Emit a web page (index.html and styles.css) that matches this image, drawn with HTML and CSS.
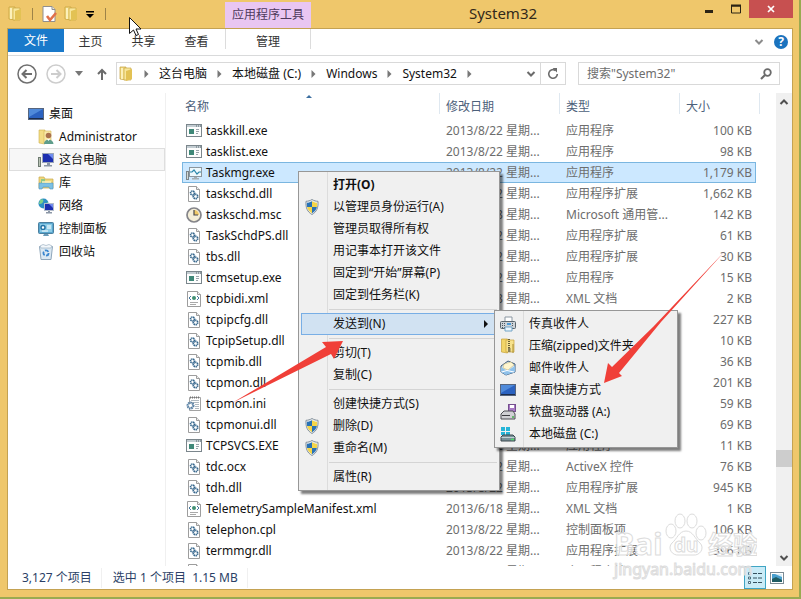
FILE: index.html
```html
<!DOCTYPE html>
<html lang="zh-CN">
<head>
    <meta charset="UTF-8">
    <meta name="viewport" content="width=device-width, initial-scale=1.0">
    <title>System32</title>
    <link rel="stylesheet" href="styles.css">
</head>
<body>
    <!-- Shared icons -->
    <svg class="sprite" aria-hidden="true">
        <symbol id="i-folder" viewBox="0 0 16 16">
            <path d="M2 1h6v13l-6-1z" fill="#f3dd85" stroke="#c39f3a" stroke-width=".7"/>
            <path d="M6 2h7v12H6z" fill="#f8e79c" stroke="#c9a746" stroke-width=".7"/>
            <path d="M8 5l6-2v10l-6 2z" fill="#e3c254"/>
            <path d="M4 2v11" stroke="#fff6cc" stroke-width="1.500"/>
        </symbol>
        <symbol id="i-props" viewBox="0 0 16 16">
            <path d="M1 .5h9l3 3v12H1z" fill="#fff" stroke="#8f8f8f"/>
            <path d="M10 .5v3h3" fill="#e4e4e4" stroke="#8f8f8f"/>
            <path d="M5 10l3 4 6-7" fill="none" stroke="#e0704a" stroke-width="2.600"/>
        </symbol>
        <symbol id="i-desktop" viewBox="0 0 16 16">
            <rect x=".5" y="2.500" width="15" height="11" fill="#2b62c0" stroke="#56657e"/>
            <path d="M1 3h14L1 11z" fill="#5f9be6" opacity=".7"/>
            <path d="M1 12.500h14" stroke="#1c2d4c"/>
        </symbol>
        <symbol id="i-user" viewBox="0 0 16 16">
            <path d="M1 1h6v14l-6-1z" fill="#f3dd85" stroke="#cfae4c" stroke-width=".6"/>
            <path d="M6 2h7v12H6z" fill="#f9e9a8" stroke="#d3b656" stroke-width=".6"/>
            <circle cx="10.500" cy="6.500" r="2.800" fill="#a9714c"/>
            <path d="M6 15c0-6 9-6 9.500 0z" fill="#5f9d8b"/>
            <path d="M9 10l1.500 2 1.500-2z" fill="#fff"/>
        </symbol>
        <symbol id="i-computer" viewBox="0 0 16 16">
            <rect x=".5" y="5.500" width="2" height="9" fill="#b9c4b6" stroke="#6f7b72"/>
            <rect x="4.500" y="1.500" width="11" height="9" fill="#1c2fb0" stroke="#9aa5b8"/>
            <path d="M10 2h5v5z" fill="#6f8cf0"/>
            <path d="M9 11h3v2H9zM6 13h8v1.500H6z" fill="#8c97a6"/>
        </symbol>
        <symbol id="i-library" viewBox="0 0 16 16">
            <path d="M1 2h5l1 2h8v9H1z" fill="#f0d77c" stroke="#c9a94a" stroke-width=".7"/>
            <path d="M3 4h4v4H3z" fill="#8fc98a"/>
            <path d="M1 14V8h14v6h-3l-1-2H5l-1 2z" fill="#7cc0e4" stroke="#5393bd" stroke-width=".6"/>
            <path d="M4 7h9" stroke="#fff3bd" stroke-width="1.500"/>
        </symbol>
        <symbol id="i-network" viewBox="0 0 16 16">
            <circle cx="5.500" cy="5.500" r="5" fill="#2c8fc4"/>
            <path d="M2 2c3-2 4 0 3 2S2 6 1 6zM7 6l3-2v4z" fill="#7ed08a"/>
            <rect x="6.500" y="5.500" width="9" height="7" fill="#1c2fb0" stroke="#b3bccb"/>
            <path d="M11 6h4v4z" fill="#7089ee"/>
            <path d="M10 13h2v1h2v1.500H8V14h2z" fill="#8c97a6"/>
        </symbol>
        <symbol id="i-control" viewBox="0 0 16 16">
            <rect x=".5" y="1.500" width="15" height="11" rx="1" fill="#5aa7cf" stroke="#4b7f9e"/>
            <rect x="2" y="3" width="12" height="8" fill="#8ccbe6"/>
            <circle cx="5" cy="6.500" r="2" fill="#fff" stroke="#2673a5" stroke-width="1.500"/>
            <path d="M9 5h4M9 7h4M4 10h6" stroke="#fff"/>
            <path d="M6 13h4l1 2H5z" fill="#6b9bb8"/>
        </symbol>
        <symbol id="i-bin" viewBox="0 0 16 16">
            <path d="M1.500 2.500h13L13 15.500H3z" fill="#dbe8f2" stroke="#8fa6ba"/>
            <path d="M2 2l3-1.500 3 1 3-1 3 1.500-1 2H3z" fill="#f4f8fb" stroke="#8fa6ba" stroke-width=".6"/>
            <circle cx="8" cy="9" r="2.600" fill="none" stroke="#3a86cf" stroke-width="1.800" stroke-dasharray="4 1.400"/>
        </symbol>
        <symbol id="i-exe" viewBox="0 0 16 16">
            <rect x=".5" y="1.500" width="15" height="12" fill="#fdfdfd" stroke="#7b868c"/>
            <path d="M1 3h14" stroke="#c3cdd2" stroke-width="2"/>
            <path d="M10 3h1M12 3h1M14 3h1" stroke="#56656d"/>
            <path d="M3 6h5v5H3z" fill="#3f8878"/>
            <path d="M10 6.500h3M10 8.500h3M10 10.500h2" stroke="#9aa5ab"/>
        </symbol>
        <symbol id="i-taskmgr" viewBox="0 0 16 16">
            <rect x=".5" y="6.500" width="2" height="8" fill="#d5dbd7" stroke="#7b858a"/>
            <rect x="3.500" y="2.500" width="12" height="9" fill="#eef8fc" stroke="#8b969d"/>
            <path d="M4 7h2l2-2 3 4 2-2h2" fill="none" stroke="#2b87ab" stroke-width="1.200"/>
            <path d="M8 12h3v1h2v1.500H6V13h2z" fill="#a5aeb2"/>
        </symbol>
        <symbol id="i-dll" viewBox="0 0 16 16">
            <path d="M2.500.5h8l3 3v12h-11z" fill="#fff" stroke="#9d9d9d"/>
            <path d="M10.500.5v3h3" fill="#eee" stroke="#9d9d9d"/>
            <circle cx="6.500" cy="7" r="2" fill="#fff" stroke="#35668c" stroke-width="1.700" stroke-dasharray="1.300 .5"/>
            <circle cx="9.500" cy="10.500" r="2.200" fill="#fff" stroke="#35668c" stroke-width="1.700" stroke-dasharray="1.300 .5"/>
        </symbol>
        <symbol id="i-msc" viewBox="0 0 16 16">
            <circle cx="8" cy="8" r="7" fill="#f5efd9" stroke="#85858a" stroke-width="1.700"/>
            <path d="M8 3a5 5 0 0 1 5 5H8z" fill="#f1ca68"/>
            <path d="M8 3v5h4" fill="none" stroke="#4a4a50" stroke-width="1.200"/>
        </symbol>
        <symbol id="i-xml" viewBox="0 0 16 16">
            <path d="M1.500.5h10l3 3v12h-13z" fill="#fff" stroke="#9d9d9d"/>
            <path d="M11.500.5v3h3" fill="#eee" stroke="#9d9d9d"/>
            <circle cx="8" cy="7" r="2" fill="#3f8f72"/>
            <path d="M5 5L3 7l2 2M11 5l2 2-2 2" fill="none" stroke="#4678a0"/>
            <path d="M4 11.500h8M4 13.500h6" stroke="#a9a9a9"/>
        </symbol>
        <symbol id="i-ini" viewBox="0 0 16 16">
            <path d="M3.500 1.500h11v13h-11z" fill="#fff" stroke="#a3a3a3"/>
            <path d="M4 1.500h10" stroke="#777" stroke-width="2" stroke-dasharray="1 1"/>
            <path d="M5 4.500h8M5 6.500h8M9 8.500h4M9 10.500h4M9 12.500h4" stroke="#b0bac2"/>
            <circle cx="4.500" cy="9.500" r="2.800" fill="#fff" stroke="#577fa3" stroke-width="2.400" stroke-dasharray="1.500 .6"/>
        </symbol>
        <symbol id="i-shield" viewBox="0 0 16 16">
            <path d="M8 .5c2 1.300 4 1.700 6 1.800C14.500 9 12.500 13 8 15.500 3.500 13 1.500 9 2 2.300 4 2.200 6 1.800 8 .5z" fill="#e9edf0" stroke="#85929c"/>
            <path d="M8 2.200V8H3.100c-.3-1.400-.3-2.800-.2-4.200C5 3.600 6.500 3.100 8 2.200z" fill="#2a72b5"/>
            <path d="M8 2.200c1.500.9 3 1.400 5.100 1.600.1 1.400.1 2.800-.2 4.200H8z" fill="#f4d548"/>
            <path d="M8 8v6.200C5.400 12.700 3.700 10.700 3.100 8z" fill="#f4d548"/>
            <path d="M8 8h4.900c-.6 2.700-2.300 4.700-4.900 6.200z" fill="#2a72b5"/>
        </symbol>
        <symbol id="i-fax" viewBox="0 0 16 16">
            <path d="M5 1h7v5H5z" fill="#fff" stroke="#8b97a2"/>
            <rect x=".5" y="5.500" width="15" height="7" rx="1" fill="#ccd2d7" stroke="#59646d"/>
            <path d="M2 7.500h4M2 9.500h4M2 11.500h3M12 7.500h2M12 9.500h2" stroke="#4d5861" stroke-dasharray="1 1"/>
            <path d="M7 7h4v2H7z" fill="#4f9bd6"/>
            <path d="M5 11h7v4H5z" fill="#eaf5fd" stroke="#73a4c6"/>
        </symbol>
        <symbol id="i-zip" viewBox="0 0 16 16">
            <path d="M1.500 1h6v14l-6-1z" fill="#f2d568" stroke="#c7a23a" stroke-width=".7"/>
            <path d="M6 2h8v12H6z" fill="#f7e28c" stroke="#c7a23a" stroke-width=".7"/>
            <path d="M9 1v9" stroke="#6d6234" stroke-width="2" stroke-dasharray="1 1"/>
            <rect x="8" y="10" width="2.500" height="4" fill="#8b8158"/>
            <path d="M13 6v9" stroke="#a98e33"/>
        </symbol>
        <symbol id="i-mail" viewBox="0 0 16 16">
            <path d="M1 6l7-5 7 3v8l-9 3-5-3z" fill="#cfe4f6" stroke="#3f5c7b"/>
            <path d="M4 4l7-2 3 3-6 5-5-2z" fill="#fff6cf" stroke="#c3b070" stroke-width=".5"/>
            <path d="M1 7l6 4 8-5v6l-9 3-5-3z" fill="#8fc1ea"/>
            <path d="M1.500 12L7 10.500 14 12" fill="none" stroke="#fff"/>
        </symbol>
        <symbol id="i-floppy" viewBox="0 0 16 16">
            <rect x="8.500" y=".5" width="7" height="7" fill="#a879c4" stroke="#76508f"/>
            <path d="M10 1h4v3h-4z" fill="#fff"/>
            <path d="M1 10l3-3h9l2 3v5H1z" fill="#d0d0d4" stroke="#4c4c52"/>
            <path d="M2 11.500h8" stroke="#3b3b40"/>
            <path d="M12 13h2" stroke="#43b04a" stroke-width="1.500"/>
        </symbol>
        <symbol id="i-drive" viewBox="0 0 16 16">
            <path d="M1 1h4v4H1zM6 1h4v4H6zM1 6h4v3H1zM6 6h4v3H6z" fill="#25b5d8"/>
            <path d="M1 11l2-2h10l2 2v4H1z" fill="#789098" stroke="#3a474d"/>
            <path d="M1.500 11.500h13" stroke="#c3d2d6"/>
            <path d="M11 13.500h3" stroke="#4fe06a" stroke-width="1.500"/>
        </symbol>
        <symbol id="i-tri" viewBox="0 0 8 8">
            <path d="M2 0l4 4-4 4z" fill="currentColor"/>
        </symbol>
        <symbol id="i-chevron" viewBox="0 0 10 10">
            <path d="M1.500 3L5 6.500 8.500 3" fill="none" stroke="currentColor" stroke-width="2"/>
        </symbol>
    </svg>

    <div class="window">
        <header class="title-bar">
            <div class="quick-access">
                <svg class="icon"><use href="#i-folder"/></svg>
                <span class="divider"></span>
                <button type="button" aria-label="属性"><svg class="icon"><use href="#i-props"/></svg></button>
                <button type="button" aria-label="新建文件夹"><svg class="icon"><use href="#i-folder"/></svg></button>
                <button type="button" class="customize" aria-label="自定义快速访问工具栏"><svg width="8" height="7" viewBox="0 0 8 7"><path d="M0 0h8v1.500H0zM0 3h8L4 7z"/></svg></button>
                <span class="divider"></span>
            </div>
            <div class="tool-label">应用程序工具</div>
            <h1>System32</h1>
            <div class="window-buttons">
                <button type="button" aria-label="最小化"><svg width="10" height="10"><path d="M1 6h8v3H1z" fill="#2b2415"/></svg></button>
                <button type="button" aria-label="最大化"><svg width="10" height="10"><path d="M.5 2v7h9V2z" fill="none" stroke="#2b2415"/><path d="M0 1.500h10" stroke="#2b2415" stroke-width="2"/></svg></button>
                <button type="button" class="close" aria-label="关闭"><svg width="8" height="8"><path d="M1 1l6 6M7 1L1 7" stroke="#fff" stroke-width="1.700"/></svg></button>
            </div>
        </header>

        <div class="frame">
            <nav class="ribbon">
                <button type="button" class="file-tab">文件</button>
                <button type="button">主页</button>
                <button type="button">共享</button>
                <button type="button">查看</button>
                <button type="button" class="tool-tab">管理</button>
                <div class="ribbon-end">
                    <button type="button" aria-label="展开功能区"><svg width="10" height="10"><use href="#i-chevron"/></svg></button>
                    <button type="button" class="help" aria-label="帮助">?</button>
                </div>
            </nav>

            <div class="address-bar">
                <div class="nav-buttons">
                    <button type="button" aria-label="后退"><svg width="20" height="20"><circle cx="10" cy="10" r="9" fill="none" stroke="#6f6f6f" stroke-width="1.500"/><path d="M15 10H6M9.500 6L5.500 10l4 4" fill="none" stroke="#6f6f6f" stroke-width="2"/></svg></button>
                    <button type="button" aria-label="前进"><svg width="20" height="20"><circle cx="10" cy="10" r="9" fill="none" stroke="#cdcdcd" stroke-width="1.500"/><path d="M5 10h9M10.500 6l4 4-4 4" fill="none" stroke="#cdcdcd" stroke-width="2"/></svg></button>
                    <button type="button" aria-label="最近位置"><svg width="8" height="5"><path d="M0 0h8L4 5z" fill="#777"/></svg></button>
                    <button type="button" class="go-up" aria-label="上移"><svg width="12" height="12"><path d="M6 12V2M2 6l4-4 4 4" fill="none" stroke="#6b6b6b" stroke-width="2"/></svg></button>
                </div>
                <div class="path">
                    <svg class="icon"><use href="#i-folder"/></svg>
                    <svg class="tri"><use href="#i-tri"/></svg><a href="#">这台电脑</a>
                    <svg class="tri"><use href="#i-tri"/></svg><a href="#">本地磁盘 (C:)</a>
                    <svg class="tri"><use href="#i-tri"/></svg><a href="#">Windows</a>
                    <svg class="tri"><use href="#i-tri"/></svg><a href="#">System32</a>
                    <svg class="tri"><use href="#i-tri"/></svg>
                    <button type="button" class="history" aria-label="历史记录"><svg width="10" height="10"><use href="#i-chevron"/></svg></button>
                    <button type="button" class="refresh" aria-label="刷新"><svg width="12" height="12"><path d="M8.500 2.500A4.300 4.300 0 1 0 10.300 6" fill="none" stroke="#6b6b6b" stroke-width="1.600"/><path d="M5.500 0h4.500v4.500z" fill="#6b6b6b"/></svg></button>
                </div>
                <form class="search">
                    <input type="text" placeholder='搜索"System32"' aria-label="搜索">
                    <button type="button" aria-label="开始搜索"><svg width="12" height="12"><circle cx="7.500" cy="4.500" r="3.300" fill="none" stroke="#6b6b6b" stroke-width="1.800"/><path d="M5 7l-4 4" stroke="#6b6b6b" stroke-width="2.200"/></svg></button>
                </form>
            </div>

            <main class="content">
                <aside class="tree">
                    <a href="#" class="root"><svg class="icon"><use href="#i-desktop"/></svg>桌面</a>
                    <a href="#"><svg class="icon"><use href="#i-user"/></svg>Administrator</a>
                    <a href="#" class="current"><svg class="icon"><use href="#i-computer"/></svg>这台电脑</a>
                    <a href="#"><svg class="icon"><use href="#i-library"/></svg>库</a>
                    <a href="#"><svg class="icon"><use href="#i-network"/></svg>网络</a>
                    <a href="#"><svg class="icon"><use href="#i-control"/></svg>控制面板</a>
                    <a href="#"><svg class="icon"><use href="#i-bin"/></svg>回收站</a>
                </aside>

                <div class="files">
                    <table>
                        <thead>
                            <tr>
                                <th class="name">名称<svg class="sort" width="6" height="3"><path d="M0 3l3-3 3 3z" fill="#3c6fa0"/></svg></th>
                                <th class="date">修改日期</th>
                                <th class="type">类型</th>
                                <th class="size">大小</th>
                            </tr>
                        </thead>
                        <tbody>
                            <tr><td><svg class="icon"><use href="#i-exe"/></svg>taskkill.exe</td><td>2013/8/22 星期...</td><td>应用程序</td><td>100 KB</td></tr>
                            <tr><td><svg class="icon"><use href="#i-exe"/></svg>tasklist.exe</td><td>2013/8/22 星期...</td><td>应用程序</td><td>98 KB</td></tr>
                            <tr class="selected"><td><svg class="icon"><use href="#i-taskmgr"/></svg>Taskmgr.exe</td><td>2013/8/22 星期...</td><td>应用程序</td><td>1,179 KB</td></tr>
                            <tr><td><svg class="icon"><use href="#i-dll"/></svg>taskschd.dll</td><td>2013/8/22 星期...</td><td>应用程序扩展</td><td>1,662 KB</td></tr>
                            <tr><td><svg class="icon"><use href="#i-msc"/></svg>taskschd.msc</td><td>2013/6/18 星期...</td><td>Microsoft 通用管...</td><td>142 KB</td></tr>
                            <tr><td><svg class="icon"><use href="#i-dll"/></svg>TaskSchdPS.dll</td><td>2013/8/22 星期...</td><td>应用程序扩展</td><td>61 KB</td></tr>
                            <tr><td><svg class="icon"><use href="#i-dll"/></svg>tbs.dll</td><td>2013/8/22 星期...</td><td>应用程序扩展</td><td>30 KB</td></tr>
                            <tr><td><svg class="icon"><use href="#i-exe"/></svg>tcmsetup.exe</td><td>2013/8/22 星期...</td><td>应用程序</td><td>15 KB</td></tr>
                            <tr><td><svg class="icon"><use href="#i-xml"/></svg>tcpbidi.xml</td><td>2013/6/18 星期...</td><td>XML 文档</td><td>2 KB</td></tr>
                            <tr><td><svg class="icon"><use href="#i-dll"/></svg>tcpipcfg.dll</td><td>2013/8/22 星期...</td><td>应用程序扩展</td><td>227 KB</td></tr>
                            <tr><td><svg class="icon"><use href="#i-dll"/></svg>TcpipSetup.dll</td><td>2013/8/22 星期...</td><td>应用程序扩展</td><td>10 KB</td></tr>
                            <tr><td><svg class="icon"><use href="#i-dll"/></svg>tcpmib.dll</td><td>2013/8/22 星期...</td><td>应用程序扩展</td><td>36 KB</td></tr>
                            <tr><td><svg class="icon"><use href="#i-dll"/></svg>tcpmon.dll</td><td>2013/8/22 星期...</td><td>应用程序扩展</td><td>201 KB</td></tr>
                            <tr><td><svg class="icon"><use href="#i-ini"/></svg>tcpmon.ini</td><td>2013/6/18 星期...</td><td>配置设置</td><td>59 KB</td></tr>
                            <tr><td><svg class="icon"><use href="#i-dll"/></svg>tcpmonui.dll</td><td>2013/8/22 星期...</td><td>应用程序扩展</td><td>69 KB</td></tr>
                            <tr><td><svg class="icon"><use href="#i-exe"/></svg>TCPSVCS.EXE</td><td>2013/8/22 星期...</td><td>应用程序</td><td>11 KB</td></tr>
                            <tr><td><svg class="icon"><use href="#i-dll"/></svg>tdc.ocx</td><td>2013/8/22 星期...</td><td>ActiveX 控件</td><td>76 KB</td></tr>
                            <tr><td><svg class="icon"><use href="#i-dll"/></svg>tdh.dll</td><td>2013/8/22 星期...</td><td>应用程序扩展</td><td>945 KB</td></tr>
                            <tr><td><svg class="icon"><use href="#i-xml"/></svg>TelemetrySampleManifest.xml</td><td>2013/6/18 星期...</td><td>XML 文档</td><td>1 KB</td></tr>
                            <tr><td><svg class="icon"><use href="#i-dll"/></svg>telephon.cpl</td><td>2013/8/22 星期...</td><td>控制面板项</td><td>106 KB</td></tr>
                            <tr><td><svg class="icon"><use href="#i-dll"/></svg>termmgr.dll</td><td>2013/8/22 星期...</td><td>应用程序扩展</td><td>396 KB</td></tr>
                            <tr><td><svg class="icon"><use href="#i-dll"/></svg>termsrv.dll</td><td>2013/8/22 星期...</td><td>应用程序扩展</td><td>975 KB</td></tr>
                        </tbody>
                    </table>
                </div>

                <div class="scrollbar">
                    <button type="button" class="up" aria-label="向上滚动"><svg width="10" height="10"><use href="#i-chevron"/></svg></button>
                    <span class="thumb"></span>
                    <button type="button" aria-label="向下滚动"><svg width="10" height="10"><use href="#i-chevron"/></svg></button>
                </div>
            </main>

            <footer class="status-bar">
                <span>3,127 个项目</span>
                <span>选中 1 个项目&nbsp; 1.15 MB</span>
                <div class="views">
                    <button type="button" class="active" aria-label="详细信息"><svg width="16" height="14"><path d="M1.500 1.500h2v2h-2zM1.500 6h2v2h-2zM1.500 10.500h2v2h-2z" fill="#fff" stroke="#4b6d7d"/><path d="M6 2.500h10M6 7h10M6 11.500h10" stroke="#35505e" stroke-dasharray="4 1"/></svg></button>
                    <button type="button" aria-label="大图标"><svg width="14" height="12"><rect x=".5" y=".5" width="13" height="11" fill="#fff" stroke="#7c8b94"/><path d="M2 2h10v8H2z" fill="#4a9fce"/><path d="M2 7l4-2 6 3v2H2z" fill="#1f5c63"/><path d="M5 2h7v3z" fill="#d9effa"/></svg></button>
                </div>
            </footer>
        </div>
    </div>

    <!-- Right-click menu -->
    <div class="menu context-menu">
        <button type="button" class="default">打开(O)</button>
        <button type="button"><svg class="icon"><use href="#i-shield"/></svg>以管理员身份运行(A)</button>
        <button type="button">管理员取得所有权</button>
        <button type="button">用记事本打开该文件</button>
        <button type="button">固定到“开始”屏幕(P)</button>
        <button type="button">固定到任务栏(K)</button>
        <hr>
        <button type="button" class="open">发送到(N)<svg class="arrow" width="8" height="8"><use href="#i-tri"/></svg></button>
        <hr>
        <button type="button">剪切(T)</button>
        <button type="button">复制(C)</button>
        <hr>
        <button type="button">创建快捷方式(S)</button>
        <button type="button"><svg class="icon"><use href="#i-shield"/></svg>删除(D)</button>
        <button type="button"><svg class="icon"><use href="#i-shield"/></svg>重命名(M)</button>
        <hr>
        <button type="button">属性(R)</button>
    </div>

    <!-- Send to -->
    <div class="menu send-menu">
        <button type="button"><svg class="icon"><use href="#i-fax"/></svg>传真收件人</button>
        <button type="button"><svg class="icon"><use href="#i-zip"/></svg>压缩(zipped)文件夹</button>
        <button type="button"><svg class="icon"><use href="#i-mail"/></svg>邮件收件人</button>
        <button type="button"><svg class="icon"><use href="#i-desktop"/></svg>桌面快捷方式</button>
        <button type="button"><svg class="icon"><use href="#i-floppy"/></svg>软盘驱动器 (A:)</button>
        <button type="button"><svg class="icon"><use href="#i-drive"/></svg>本地磁盘 (C:)</button>
    </div>

    <!-- Arrows and mouse pointer -->
    <svg class="marks" width="740" height="420">
        <path d="M232 403L326 347l-4-5 21-1-9 18-3-5z" fill="#f03f38"/>
        <path d="M726 250L654 326 612 367l-4-4-4 20 18-7-3-3 42-51z" fill="#f03f38"/>
        <path d="M129.500 17.500v16l4-3.500 2.500 5.500 2.500-1-2.500-5.500h5z" fill="#fff" stroke="#111"/>
    </svg>

    <svg class="watermark" width="150" height="72">
        <g fill="#fff" fill-opacity=".7" stroke="#dcdcdc">
            <ellipse cx="64" cy="21" rx="5" ry="7"/>
            <ellipse cx="73" cy="11" rx="5" ry="7"/>
            <ellipse cx="85" cy="11" rx="5" ry="7"/>
            <ellipse cx="94" cy="23" rx="5" ry="7"/>
            <path d="M79 21c7 0 9 8 14 12 5 5 0 13-7 12h-14c-7 1-12-7-7-12 5-4 7-12 14-12z"/>
            <text x="7" y="45" class="mark-name">Bai</text>
            <text x="67" y="42" class="mark-du">du</text>
            <text x="101" y="44" class="mark-zh">经验</text>
            <text x="7" y="65" class="mark-url">jingyan.baidu.com</text>
        </g>
    </svg>
</body>
</html>
```
FILE: styles.css
```css
* {
    box-sizing: border-box;
}

body {
    margin: 0;
    height: 100vh;
    padding: 0 2px 2px 0;
    position: relative;
    overflow: hidden;
    background-color: #9aaa50;
    font-family: "Noto Sans", "Noto Sans CJK SC", sans-serif;
    font-size: 12px;
    line-height: 20px;
    color: #111;
}

button, input {
    font: inherit;
    color: inherit;
    border: none;
    background: none;
    padding: 0;
    margin: 0;
}

button {
    display: flex;
    align-items: center;
    justify-content: center;
}

a {
    color: inherit;
    text-decoration: none;
}

.sprite {
    display: none;
}

.icon {
    width: 16px;
    height: 16px;
    flex: none;
}

/* Window frame */
.window {
    height: 100%;
    display: flex;
    flex-direction: column;
    padding: 0 6px 7px 7px;
    background-color: #efc76b;
}

.frame {
    flex: 1;
    min-height: 0;
    display: flex;
    flex-direction: column;
    background-color: #fff;
    border: 1px solid #c4a252;
}

.title-bar {
    height: 28px;
    display: flex;
}

.quick-access {
    width: 218px;
    display: flex;
    align-items: center;
    gap: 5px;
}

.customize {
    padding: 0 2px;
}

.divider {
    width: 1px;
    height: 12px;
    margin: 0 4px;
    background-color: #9d8348;
}

.tool-label {
    width: 86px;
    margin-top: 2px;
    line-height: 26px;
    text-align: center;
    color: #4e3a5c;
    background-color: #e9c6f2;
}

.title-bar h1 {
    flex: 1;
    margin: 0;
    font-size: 15px;
    font-weight: normal;
    line-height: 26px;
    text-align: center;
    color: #33291a;
}

.window-buttons {
    display: flex;
}

.window-buttons button {
    width: 27px;
    height: 18px;
}

.window-buttons .close {
    width: 44px;
    background-color: #c75050;
}

/* Ribbon tabs */
.ribbon {
    height: 27px;
    display: flex;
    border-bottom: 1px solid #d9dadb;
}

.ribbon button {
    width: 53px;
    color: #333;
}

.ribbon .file-tab {
    width: 56px;
    height: 23px;
    color: #fff;
    background-color: #1979ca;
}

.ribbon .tool-tab {
    width: 86px;
    height: 20px;
    margin-left: 2px;
    border: 1px solid #dcdcdc;
    border-width: 0 1px;
    padding-top: 6px;
}

.ribbon-end {
    margin-left: auto;
    padding-right: 4px;
    display: flex;
    align-items: center;
    gap: 8px;
}

.ribbon .ribbon-end button {
    width: 14px;
    height: 14px;
    color: #8b8b8b;
}

.ribbon .ribbon-end .help {
    border-radius: 50%;
    color: #fff;
    font-weight: bold;
    background-color: #1b73be;
}

/* Address bar */
.address-bar {
    display: flex;
    gap: 12px;
    padding: 6px 12px 8px 9px;
}

.nav-buttons {
    width: 87px;
    display: flex;
    align-items: center;
    gap: 9px;
}

.go-up {
    margin-left: 4px;
}

.path, .search {
    height: 23px;
    display: flex;
    align-items: center;
    border: 1px solid #d9d9d9;
}

.path {
    flex: 1;
    padding-left: 1px;
    white-space: nowrap;
}

.path .tri {
    width: 25px;
    height: 8px;
    color: #777;
}

.path button {
    width: 25px;
    height: 21px;
    color: #6b6b6b;
}

.path .history {
    width: 18px;
    margin-left: auto;
}

.path .refresh {
    border-left: 1px solid #d9d9d9;
}

.search {
    width: 202px;
    padding: 0 7px 0 8px;
}

.search input {
    flex: 1;
    min-width: 0;
    outline: none;
}

.search input::placeholder {
    color: #6d6d6d;
    opacity: 1;
}

/* Navigation tree and file list */
.content {
    flex: 1;
    min-height: 0;
    display: flex;
    overflow: hidden;
}

.tree {
    width: 158px;
    padding: 9px 0 0 1px;
    border-right: 1px solid #f0f0f0;
}

.tree a {
    height: 23px;
    display: flex;
    align-items: center;
    gap: 5px;
    padding-left: 28px;
    border: 1px solid transparent;
}

.tree .root {
    padding-left: 18px;
}

.tree .current {
    background-color: #f7f7f7;
    border-color: #dedede;
}

.files {
    flex: 1;
    min-width: 0;
    padding: 0 16px;
}

table {
    width: 100%;
    table-layout: fixed;
    border-spacing: 0;
}

th {
    position: relative;
    height: 27px;
    padding: 0 0 0 6px;
    font-weight: normal;
    text-align: left;
    color: #4c607a;
    background: linear-gradient(#dfe8f0, #dfe8f0) right top / 1px 21px no-repeat;
}

th.name {
    padding-left: 3px;
}

th.date, th.type {
    width: 120px;
}

th.size {
    width: 80px;
}

.sort {
    position: absolute;
    top: 2px;
    left: 48%;
}

td {
    height: 21px;
    padding: 0 0 0 6px;
    white-space: nowrap;
    color: #6d6d6d;
}

td:first-child {
    padding-left: 4px;
    color: #111;
}

td:last-child {
    padding-right: 4px;
    border-right: 4px solid transparent;
    background-clip: padding-box;
    text-align: right;
}

td .icon {
    margin-right: 4px;
    vertical-align: middle;
}

.selected td {
    background-color: #cce8ff;
    box-shadow: inset 0 1px #7ab6e0, inset 0 -1px #7ab6e0;
}

.selected td:first-child {
    box-shadow: inset 0 1px #7ab6e0, inset 1px -1px #7ab6e0;
}

.selected td:last-child {
    box-shadow: inset 0 1px #7ab6e0, inset -1px -1px #7ab6e0;
}

.scrollbar {
    width: 16px;
    display: flex;
    flex-direction: column;
    background-color: #f0f0f0;
    color: #505050;
}

.scrollbar button {
    height: 17px;
}

.scrollbar .up svg {
    transform: rotate(180deg);
}

.thumb {
    height: 17px;
    margin: auto 0 82px;
    background-color: #cdcdcd;
}

/* Status bar */
.status-bar {
    height: 23px;
    display: flex;
    align-items: center;
    padding-left: 3px;
    color: #2b3f66;
}

.status-bar span {
    padding: 0 9px 0 11px;
    border-right: 1px solid #f0f0f0;
}

.views {
    margin-left: auto;
    display: flex;
    padding-right: 4px;
}

.views button {
    width: 22px;
    height: 23px;
}

.views .active {
    background-color: #c9ebf7;
    border: 1px solid #3fa5c4;
}

/* Menus */
.menu {
    position: absolute;
    padding: 2px;
    border: 1px solid #979797;
    background: linear-gradient(#dcdcdc, #dcdcdc) 28px 0 / 1px 100% no-repeat #f0f0f0;
    box-shadow: 3px 3px 2px rgba(0, 0, 0, 0.5);
}

.menu button {
    position: relative;
    width: 100%;
    height: 22px;
    justify-content: flex-start;
    padding-left: 32px;
}

.menu .icon {
    position: absolute;
    left: 3px;
}

.menu hr {
    height: 1px;
    margin: 3px 0 3px 28px;
    border: none;
    background-color: #d4d4d4;
}

.menu .default {
    font-weight: bold;
}

.menu .open {
    background-color: #d1e2f2;
    box-shadow: inset 0 0 0 1px #78aee5;
}

.menu .arrow {
    margin-left: auto;
    margin-right: 7px;
}

.context-menu {
    left: 298px;
    top: 171px;
    width: 202px;
}

.send-menu {
    left: 494px;
    top: 310px;
    width: 184px;
}

.marks {
    position: absolute;
    left: 0;
    top: 0;
    pointer-events: none;
}

.watermark {
    position: absolute;
    right: 44px;
    bottom: 17px;
    pointer-events: none;
}

.mark-name {
    font-size: 31px;
    font-weight: bold;
}

.mark-du {
    font-size: 19px;
    font-weight: bold;
}

.mark-zh {
    font-size: 25px;
    font-weight: bold;
}

.mark-url {
    font-size: 16px;
}
```
